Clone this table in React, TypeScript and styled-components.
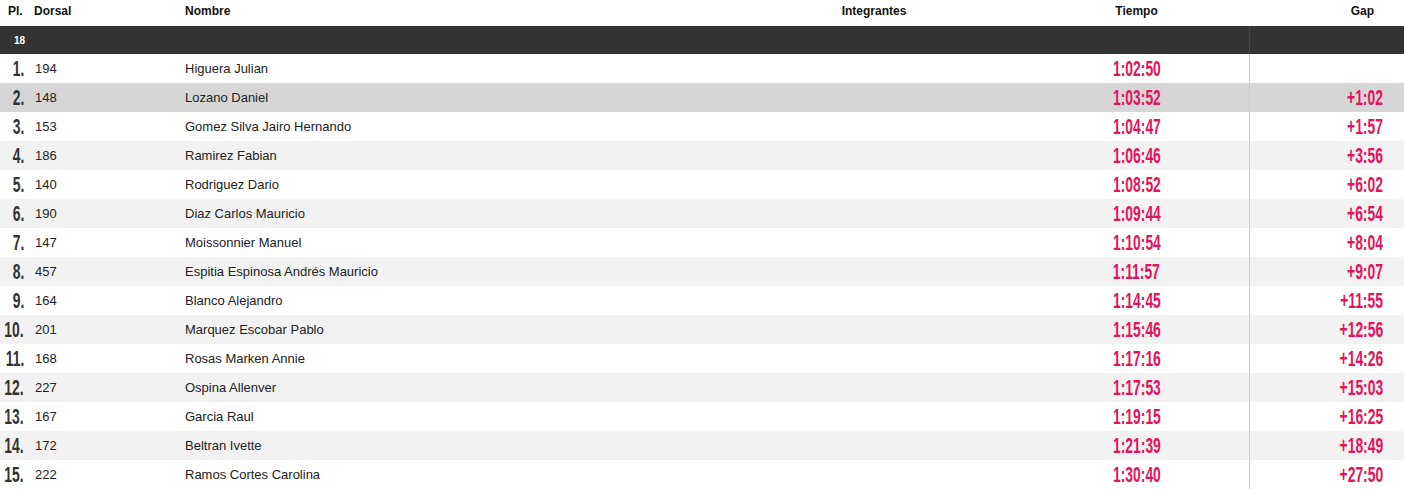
import styled, { createGlobalStyle } from "styled-components";

const GlobalStyle = createGlobalStyle`
  body {
    margin: 0;
    background: #fff;
    font-family: "Liberation Sans", Arial, sans-serif;
    color: #222;
  }
`;

const COLUMNS = "26px 159px 615px 148px 76px 225px 155px";

const Table = styled.div`
  width: 1404px;
  display: flex;
  flex-direction: column;
`;

const HeaderRow = styled.div`
  display: grid;
  grid-template-columns: ${COLUMNS};
  height: 26px;
  align-items: center;
  font-size: 12px;
  font-weight: 700;
  color: #111;
`;

const HeadCell = styled.div<{ $align?: "left" | "center" | "right"; $pad?: string }>`
  text-align: ${(p) => p.$align || "left"};
  padding: ${(p) => p.$pad || "0"};
  padding-bottom: 4px;
  white-space: nowrap;
`;

const GroupBand = styled.div`
  display: grid;
  grid-template-columns: 1249px 1fr;
  height: 28px;
  background: #333;
  color: #fff;
  font-size: 10px;
  font-weight: 700;
`;

const GroupLabel = styled.div`
  padding-left: 14px;
  display: flex;
  align-items: center;
`;

const BandSplit = styled.div`
  border-left: 1px solid #444;
`;

const Row = styled.div<{ $tone: "white" | "stripe" | "hover" }>`
  display: grid;
  grid-template-columns: ${COLUMNS};
  height: 29px;
  align-items: center;
  font-size: 13px;
  background: ${(p) =>
    p.$tone === "hover" ? "#d6d6d6" : p.$tone === "stripe" ? "#f2f2f2" : "#fff"};
`;

const Cell = styled.div<{ $pad?: string }>`
  padding: ${(p) => p.$pad || "0"};
  white-space: nowrap;
`;

// tall condensed figures, like the race display font
const Figures = styled.span<{ $origin: "left" | "center" | "right" }>`
  display: inline-block;
  flex-shrink: 0;
  font-family: "Liberation Sans", Arial, sans-serif;
  font-weight: 700;
  font-size: 22px;
  line-height: 22px;
  white-space: nowrap;
  transform: scaleX(0.63);
  transform-origin: ${(p) => p.$origin} center;
`;

const Place = styled.div`
  display: flex;
  justify-content: flex-end;
  padding-right: 2px;
  color: #333;
`;

const TimeCell = styled.div`
  display: flex;
  justify-content: center;
  color: #e3135e;
`;

const GapCell = styled.div`
  align-self: stretch;
  display: flex;
  align-items: center;
  justify-content: flex-end;
  padding-right: 21px;
  border-left: 1px solid #ccc;
  color: #e3135e;
`;

const results = [
  ["194", "Higuera Julian", "1:02:50", ""],
  ["148", "Lozano Daniel", "1:03:52", "+1:02"],
  ["153", "Gomez Silva Jairo Hernando", "1:04:47", "+1:57"],
  ["186", "Ramirez Fabian", "1:06:46", "+3:56"],
  ["140", "Rodriguez Dario", "1:08:52", "+6:02"],
  ["190", "Diaz Carlos Mauricio", "1:09:44", "+6:54"],
  ["147", "Moissonnier Manuel", "1:10:54", "+8:04"],
  ["457", "Espitia Espinosa Andrés Mauricio", "1:11:57", "+9:07"],
  ["164", "Blanco Alejandro", "1:14:45", "+11:55"],
  ["201", "Marquez Escobar Pablo", "1:15:46", "+12:56"],
  ["168", "Rosas Marken Annie", "1:17:16", "+14:26"],
  ["227", "Ospina Allenver", "1:17:53", "+15:03"],
  ["167", "Garcia Raul", "1:19:15", "+16:25"],
  ["172", "Beltran Ivette", "1:21:39", "+18:49"],
  ["222", "Ramos Cortes Carolina", "1:30:40", "+27:50"],
];

export default function App() {
  return (
    <Table>
      <GlobalStyle />
      <HeaderRow>
        <HeadCell $pad="0 0 0 8px">Pl.</HeadCell>
        <HeadCell $pad="0 0 0 8px">Dorsal</HeadCell>
        <HeadCell>Nombre</HeadCell>
        <HeadCell $align="center">Integrantes</HeadCell>
        <HeadCell />
        <HeadCell $align="center">Tiempo</HeadCell>
        <HeadCell $align="right" $pad="0 30px 0 0">Gap</HeadCell>
      </HeaderRow>
      <GroupBand>
        <GroupLabel>18</GroupLabel>
        <BandSplit />
      </GroupBand>
      {results.map(([bib, name, time, gap], i) => (
        <Row key={bib} $tone={i === 1 ? "hover" : i % 2 ? "stripe" : "white"}>
          <Place>
            <Figures $origin="right">{i + 1}.</Figures>
          </Place>
          <Cell $pad="0 0 0 9px">{bib}</Cell>
          <Cell>{name}</Cell>
          <Cell />
          <Cell />
          <TimeCell>
            <Figures $origin="center">{time}</Figures>
          </TimeCell>
          <GapCell>
            <Figures $origin="right">{gap}</Figures>
          </GapCell>
        </Row>
      ))}
    </Table>
  );
}
